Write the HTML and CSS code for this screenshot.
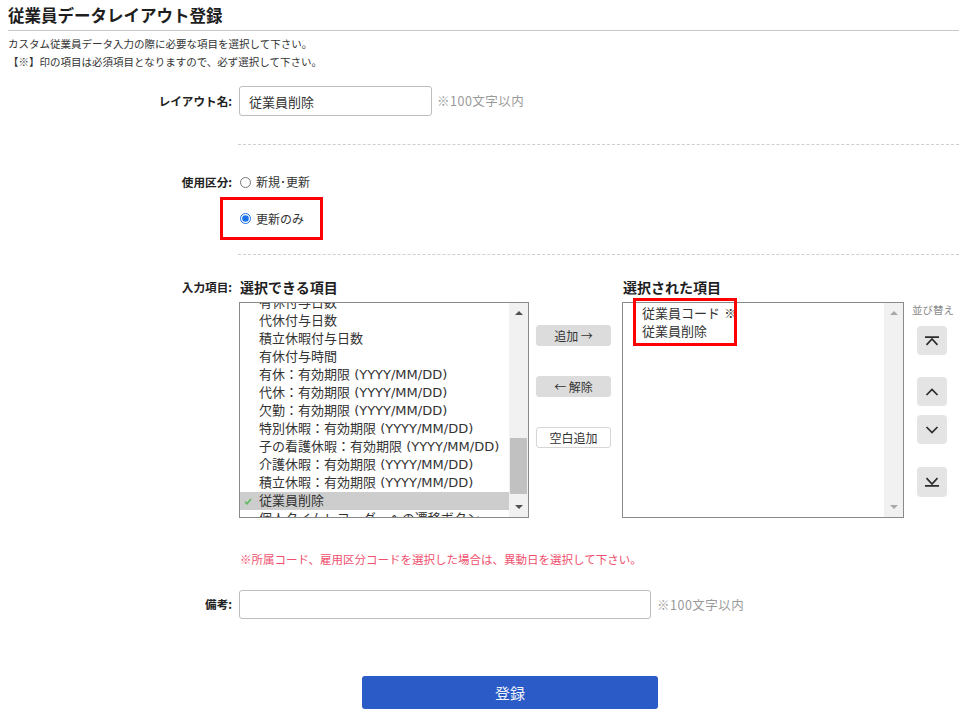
FILE: index.html
```html
<!DOCTYPE html>
<html lang="ja">
<head>
<meta charset="utf-8">
<title>従業員データレイアウト登録</title>
<link rel="stylesheet" href="styles.css">
</head>
<body>
<div class="page">
  <h1 class="title">従業員データレイアウト登録</h1>
  <div class="desc">
    <p>カスタム従業員データ入力の際に必要な項目を選択して下さい。</p>
    <p>【※】印の項目は必須項目となりますので、必ず選択して下さい。</p>
  </div>

  <div class="row row-name">
    <div class="label label-30">レイアウト名:</div>
    <div class="field field-inline">
      <input class="text-input name-input" type="text" value="従業員削除">
      <span class="hint">※100文字以内</span>
    </div>
  </div>

  <hr class="sep sep-1">

  <div class="row row-usage">
    <div class="label label-20">使用区分:</div>
    <div class="field">
      <label class="radio"><input type="radio" name="usage"><span>新規･更新</span></label>
      <div class="highlight-radio">
        <label class="radio"><input type="radio" name="usage" checked><span>更新のみ</span></label>
      </div>
    </div>
  </div>

  <hr class="sep sep-2">

  <div class="row row-items">
    <div class="label label-20">入力項目:</div>
    <div class="field picker">
      <div class="col-avail">
        <div class="col-head">選択できる項目</div>
        <div class="listbox">
          <div class="list-content">
            <ul class="items items-scrolled">
              <li>有休付与日数</li>
              <li>代休付与日数</li>
              <li>積立休暇付与日数</li>
              <li>有休付与時間</li>
              <li>有休：有効期限 (YYYY/MM/DD)</li>
              <li>代休：有効期限 (YYYY/MM/DD)</li>
              <li>欠勤：有効期限 (YYYY/MM/DD)</li>
              <li>特別休暇：有効期限 (YYYY/MM/DD)</li>
              <li>子の看護休暇：有効期限 (YYYY/MM/DD)</li>
              <li>介護休暇：有効期限 (YYYY/MM/DD)</li>
              <li>積立休暇：有効期限 (YYYY/MM/DD)</li>
              <li class="selected"><svg class="check" width="8" height="7" viewBox="0 0 8 7"><path d="M1 3.8L3 5.8L7 1" fill="none" stroke="#5cb85c" stroke-width="1.6"/></svg>従業員削除</li>
              <li>個人タイムレコーダーへの遷移ボタン</li>
            </ul>
          </div>
          <div class="sb">
            <div class="sb-btn"><span class="tri-up"></span></div>
            <div class="sb-track"><div class="sb-thumb"></div></div>
            <div class="sb-btn"><span class="tri-down"></span></div>
          </div>
        </div>
      </div>

      <div class="col-mid">
        <button class="mid-btn" type="button">追加 →</button>
        <button class="mid-btn" type="button">← 解除</button>
        <button class="mid-btn mid-btn-light" type="button">空白追加</button>
      </div>

      <div class="col-sel">
        <div class="col-head">選択された項目</div>
        <div class="listbox listbox-sel">
          <div class="list-content list-content-sel">
            <ul class="items">
              <li>従業員コード <span class="mark">※</span></li>
              <li>従業員削除</li>
            </ul>
          </div>
          <div class="sb sb-disabled">
            <div class="sb-btn"><span class="tri-up"></span></div>
            <div class="sb-track"></div>
            <div class="sb-btn"><span class="tri-down"></span></div>
          </div>
          <div class="mark-box"></div>
        </div>
      </div>

      <div class="col-sort">
        <div class="sort-head">並び替え</div>
        <button class="sort-btn sort-top" type="button" aria-label="先頭へ">
          <svg width="16" height="10" viewBox="0 0 16 10"><path d="M1 1.2H15M2.5 8.8L8 3L13.5 8.8" fill="none" stroke="#2b2b2b" stroke-width="1.7"/></svg>
        </button>
        <button class="sort-btn sort-up" type="button" aria-label="上へ">
          <svg width="14" height="8" viewBox="0 0 14 8"><path d="M1.5 7L7 1.5L12.5 7" fill="none" stroke="#2b2b2b" stroke-width="1.7"/></svg>
        </button>
        <button class="sort-btn sort-down" type="button" aria-label="下へ">
          <svg width="14" height="8" viewBox="0 0 14 8"><path d="M1.5 1L7 6.5L12.5 1" fill="none" stroke="#2b2b2b" stroke-width="1.7"/></svg>
        </button>
        <button class="sort-btn sort-bottom" type="button" aria-label="末尾へ">
          <svg width="16" height="10" viewBox="0 0 16 10"><path d="M2.5 1.2L8 7L13.5 1.2M1 8.8H15" fill="none" stroke="#2b2b2b" stroke-width="1.7"/></svg>
        </button>
      </div>
    </div>
  </div>

  <p class="note">※所属コード、雇用区分コードを選択した場合は、異動日を選択して下さい。</p>

  <div class="row row-memo">
    <div class="label label-29">備考:</div>
    <div class="field field-inline">
      <input class="text-input memo-input" type="text" value="">
      <span class="hint hint-memo">※100文字以内</span>
    </div>
  </div>

  <div class="submit-row">
    <button class="submit" type="button">登録</button>
  </div>
</div>
</body>
</html>
```

FILE: styles.css
```css
html, body {
  margin: 0;
  padding: 0;
  background: #fff;
}

body {
  font-family: "Noto Sans CJK JP", "Noto Sans", sans-serif;
  color: #333;
}

.page {
  padding: 0 0 20px 8px;
}

.title {
  margin: 0;
  padding: 3px 0 3px;
  font-size: 16.5px;
  line-height: 24px;
  font-weight: bold;
  color: #1e1e1e;
  border-bottom: 1px solid #c8c8c8;
}

.desc {
  margin-top: 4px;
  font-size: 10.5px;
  line-height: 18px;
  color: #333;
}

.desc p {
  margin: 0;
}

.row {
  display: grid;
  grid-template-columns: 224px 1fr;
  column-gap: 7px;
  align-items: start;
}

.field {
  line-height: 20px;
  font-size: 12px;
}

.label {
  text-align: right;
  font-weight: bold;
  font-size: 11.6px;
  color: #222;
  white-space: nowrap;
}

.label-30 { line-height: 30px; }
.label-29 { line-height: 29px; }
.label-20 { line-height: 20px; }

.row-name {
  margin-top: 15px;
}

.field-inline {
  display: flex;
  align-items: center;
}

.text-input {
  box-sizing: border-box;
  border: 1px solid #bdbdbd;
  border-radius: 3px;
  padding: 0 9px;
  font-family: inherit;
  font-size: 13px;
  color: #333;
  background: #fff;
  outline: none;
}

.name-input {
  width: 193px;
  height: 30px;
}

.memo-input {
  width: 412px;
  height: 29px;
}

.hint {
  margin-left: 5px;
  font-size: 12.5px;
  letter-spacing: 0.5px;
  color: #9a9a9a;
  white-space: nowrap;
}

.hint-memo {
  margin-left: 6px;
}

.sep {
  height: 0;
  border: 0;
  border-top: 1px dashed #cfcfcf;
  margin: 28px 0 0 230px;
}

.sep-2 {
  margin-top: 14px;
}

.row-usage {
  margin-top: 27px;
}

.radio {
  display: flex;
  align-items: center;
  height: 20px;
  font-size: 12px;
  line-height: 20px;
  color: #333;
}

.radio input {
  width: 11px;
  height: 11px;
  margin: 0 5px 0 1px;
  accent-color: #1a73e8;
}

.highlight-radio {
  box-sizing: border-box;
  width: 103px;
  height: 43px;
  margin: 5px 0 0 -19px;
  border: 3px solid #ff0000;
  padding-left: 16px;
  display: flex;
  align-items: center;
}

.row-items {
  margin-top: 22px;
}

.picker {
  display: flex;
  align-items: flex-start;
}

.col-head {
  font-size: 14px;
  font-weight: bold;
  line-height: 20px;
  color: #1e1e1e;
  margin-bottom: 5px;
  padding-left: 1px;
  white-space: nowrap;
}

.col-avail {
  width: 290px;
}

.col-sel {
  width: 282px;
  margin-left: 11px;
}

.listbox {
  box-sizing: border-box;
  height: 216px;
  border: 1px solid #8a8a8a;
  display: flex;
  position: relative;
  background: #fff;
}

.list-content {
  flex: 1;
  overflow: hidden;
  min-width: 0;
}

.items {
  margin: 0;
  padding: 0;
  list-style: none;
  font-family: "DejaVu Sans", "Noto Sans CJK JP", sans-serif;
  font-size: 13px;
  line-height: 18px;
  color: #333;
}

.items .mark {
  font-family: "Noto Sans CJK JP", sans-serif;
}

.items-scrolled {
  margin-top: -9px;
}

.list-content-sel {
  padding-top: 1px;
}

.items li {
  position: relative;
  padding-left: 19px;
  white-space: nowrap;
}

.items li.selected {
  background: #cdcdcd;
}

.check {
  position: absolute;
  left: 4px;
  top: 6px;
}

.sb {
  width: 19px;
  background: #f1f1f1;
  display: flex;
  flex-direction: column;
}

.sb-btn {
  height: 20px;
  display: flex;
  align-items: center;
  justify-content: center;
}

.tri-up {
  width: 0;
  height: 0;
  border-left: 4px solid transparent;
  border-right: 4px solid transparent;
  border-bottom: 4px solid #505050;
}

.tri-down {
  width: 0;
  height: 0;
  border-left: 4px solid transparent;
  border-right: 4px solid transparent;
  border-top: 4px solid #505050;
}

.sb-disabled .tri-up { border-bottom-color: #a8a8a8; }
.sb-disabled .tri-down { border-top-color: #a8a8a8; }

.sb-track {
  flex: 1;
  padding-top: 115px;
}

.sb-thumb {
  height: 56px;
  margin: 0 1px;
  background: #c1c1c1;
}

.mark-box {
  position: absolute;
  left: 10px;
  top: -5px;
  width: 104px;
  height: 48px;
  box-sizing: border-box;
  border: 3px solid #ff0000;
  pointer-events: none;
}

.col-mid {
  width: 75px;
  margin-left: 7px;
  padding-top: 48px;
  display: flex;
  flex-direction: column;
  gap: 30px;
}

.mid-btn {
  box-sizing: border-box;
  height: 21px;
  width: 75px;
  border: 1px solid #dcdcdc;
  border-radius: 3px;
  background: #dcdcdc;
  font-family: inherit;
  font-size: 12px;
  line-height: 19px;
  color: #333;
  padding: 0;
  cursor: pointer;
}

.mid-btn-light {
  background: #fff;
  border-color: #d6d6d6;
}

.col-sort {
  margin-left: 8px;
  padding-top: 25px;
  display: flex;
  flex-direction: column;
}

.sort-head {
  font-size: 10.5px;
  line-height: 16px;
  color: #8a8a8a;
  white-space: nowrap;
}

.sort-btn {
  width: 30px;
  height: 29px;
  margin-left: 5px;
  border: 0;
  border-radius: 4px;
  background: #e4e4e4;
  padding: 0;
  display: flex;
  align-items: center;
  justify-content: center;
  cursor: pointer;
}

.sort-top { margin-top: 8px; }
.sort-up { margin-top: 22px; }
.sort-down { margin-top: 9px; }
.sort-bottom { margin-top: 23px; height: 30px; }

.note {
  margin: 32px 0 0 232px;
  font-size: 11.5px;
  line-height: 18px;
  color: #f0506e;
  white-space: nowrap;
}

.row-memo {
  margin-top: 22px;
}

.submit-row {
  margin-top: 57px;
  padding-left: 354px;
}

.submit {
  width: 296px;
  height: 33px;
  border: 0;
  border-radius: 3px;
  background: #2a5bc6;
  color: #eef2fa;
  font-family: inherit;
  font-size: 15px;
  cursor: pointer;
}
```
